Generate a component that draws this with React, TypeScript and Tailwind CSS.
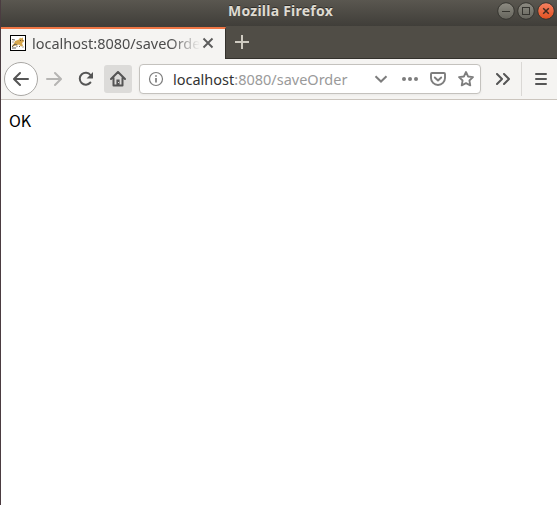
import React from 'react';

function WindowButton({ kind }: { kind: 'min' | 'max' | 'close' }) {
  const close = kind === 'close';
  return (
    <svg width="18" height="18" viewBox="0 0 18 18" className="block shrink-0">
      <defs>
        <linearGradient id={'g-' + kind} x1="0" y1="0" x2="0" y2="1">
          <stop offset="0" stopColor={close ? '#f58263' : '#8e8c83'} />
          <stop offset="1" stopColor={close ? '#e2501f' : '#65645c'} />
        </linearGradient>
      </defs>
      <circle cx="9" cy="9" r="8.3" fill={'url(#g-' + kind + ')'} stroke="#35342f" />
      {kind === 'min' && <path d="M5 9.5h8" stroke="#35342f" />}
      {kind === 'max' && <rect x="5.5" y="5.5" width="7" height="7" fill="none" stroke="#35342f" />}
      {close && <path d="M6.2 6.2l5.6 5.6M11.8 6.2l-5.6 5.6" stroke="#3f2a20" strokeWidth="1.5" />}
    </svg>
  );
}

function TitleBar() {
  return (
    <header className="flex h-[26px] items-center bg-linear-to-b from-[#5a5750] to-[#403e39]">
      <div className="w-[496px] pl-[227px] pb-[5px]">
        <h1 className="whitespace-nowrap text-[14px] leading-5 font-bold tracking-[0.24px] text-[#dfdbd2] [text-shadow:0_-1px_0_#2e2c28]">
          Mozilla Firefox
        </h1>
      </div>
      <div className="flex gap-[2px] pb-[4px]">
        <WindowButton kind="min" />
        <WindowButton kind="max" />
        <WindowButton kind="close" />
      </div>
    </header>
  );
}

function Favicon() {
  return (
    <svg width="16" height="16" viewBox="0 0 16 16" className="block shrink-0">
      <rect x=".5" y=".5" width="15" height="15" fill="#fff" stroke="#000" />
      <path d="M5 6l4-1.500 1-2 1 1 2-1v2l1 2-2 1.500 1 3-2 .500-2-2-3 1-3 1-1-1 2-2z" fill="#d6a74e" />
      <path d="M2 4.500l3 .5M2 12l3-3 2 1M2 13h4M9 11l1 1" stroke="#5d5b55" fill="none" />
      <path d="M2 7h2M6 12l2-1M12 12h2" stroke="#aaa69d" fill="none" />
      <path d="M10 5.500h1M12.500 5.500h1" stroke="#725021" />
    </svg>
  );
}

function TabStrip() {
  return (
    <div className="flex h-[33px] border-b border-[#33312c] bg-[#504d46]">
      <div className="-mb-px flex h-[33px] w-[225px] shrink-0 flex-col">
        <div className="h-px shrink-0 bg-[#403e39]" />
        <div className="flex h-[32px] items-center border-t-2 border-r border-t-[#f07746] border-r-[#33312c] bg-[#f5f4f2] pb-[2px] pl-[9px]">
          <Favicon />
          <div className="ml-[6px] w-[168px] overflow-hidden whitespace-nowrap text-[14.5px] leading-5 text-[#4c4c4c] [mask-image:linear-gradient(to_right,black_138px,transparent_168px)]">
            localhost:8080/saveOrder
          </div>
          <svg width="12" height="12" viewBox="0 0 12 12" className="ml-[2px] shrink-0">
            <path d="M1.500 1.500l9 9M10.500 1.500l-9 9" stroke="#5c5c5c" strokeWidth="1.900" />
          </svg>
        </div>
      </div>
      <svg width="14" height="14" viewBox="0 0 14 14" className="mt-[9px] ml-[9px]">
        <path d="M7 0v14M0 7h14" stroke="#cfcbc1" strokeWidth="2" />
      </svg>
    </div>
  );
}

function AddressBar() {
  return (
    <div className="ml-[7px] flex h-[30px] w-[342px] shrink-0 items-center rounded-[4px] border border-[#c4c2be] bg-white shadow-[0_1px_3px_rgba(0,0,0,0.05)]">
      <svg width="16" height="16" viewBox="0 0 16 16" className="ml-[8px] shrink-0" fill="none" stroke="#7c7c7c">
        <circle cx="8" cy="8" r="6.5" strokeWidth="1.2" />
        <path d="M8 7v4.5M8 4.2v1.6" strokeWidth="1.7" />
      </svg>
      <div className="ml-[9px] w-[201px] whitespace-nowrap text-[14.5px] leading-5 text-[#9a9a9a]">
        <span className="text-[#333333]">localhost</span>:8080/saveOrder
      </div>
      <svg width="14" height="8" viewBox="0 0 14 8" className="shrink-0" fill="none" stroke="#7d7d7d" strokeWidth="2">
        <path d="M1.5 1.2L7 6.5l5.500-5.300" />
      </svg>
      <svg width="16" height="16" viewBox="0 0 16 16" className="ml-[14px] shrink-0" fill="#7d7d7d">
        <circle cx="2" cy="8" r="2" />
        <circle cx="8" cy="8" r="2" />
        <circle cx="14" cy="8" r="2" />
      </svg>
      <svg width="16" height="16" viewBox="0 0 16 16" className="ml-[12px] shrink-0" fill="none" stroke="#7d7d7d" strokeWidth="1.900" strokeLinecap="round" strokeLinejoin="round">
        <path d="M2 2h12a1 1 0 0 1 1 1v4a7 7 0 0 1-14 0V3a1 1 0 0 1 1-1z" />
        <path d="M4.800 6.500L8 9.500l3.200-3" />
      </svg>
      <svg width="16" height="16" viewBox="0 0 16 16" className="ml-[12px] shrink-0" fill="none" stroke="#7d7d7d" strokeWidth="1.800" strokeLinejoin="round">
        <path d="M8 1l2.100 4.500 4.900.6-3.600 3.400.9 4.900L8 12.100l-4.300 2.300.9-4.900L1 6.100l4.900-.6z" />
      </svg>
    </div>
  );
}

function Toolbar() {
  return (
    <nav className="flex h-[41px] items-center border-b border-[#cbc5be] bg-[#f5f4f2]">
      <div className="ml-[3px] flex h-[34px] w-[34px] shrink-0 items-center justify-center rounded-full border border-[#aaa8a5] bg-white">
        <svg width="16" height="16" viewBox="0 0 16 16" fill="none" stroke="#555" strokeWidth="2" strokeLinecap="round" strokeLinejoin="round">
          <path d="M7 2L1 8l6 6M1.500 8H15" />
        </svg>
      </div>
      <svg width="16" height="16" viewBox="0 0 16 16" className="ml-[8px] shrink-0" fill="none" stroke="#b6b5b3" strokeWidth="2" strokeLinecap="round" strokeLinejoin="round">
        <path d="M9 2l6 6-6 6M14.500 8H1" />
      </svg>
      <svg width="16" height="16" viewBox="0 0 16 16" className="ml-[16px] shrink-0">
        <path d="M12.400 11.500A6 6 0 1 1 12.500 4" fill="none" stroke="#555" strokeWidth="2" strokeLinecap="round" />
        <path d="M15 1v6a.6.6 0 0 1-.6.6H8.500z" fill="#555" />
      </svg>
      <div className="ml-[10px] flex h-[28px] w-[28px] shrink-0 items-center justify-center rounded-[3px] bg-[#dcdbd9]">
        <svg width="16" height="16" viewBox="0 0 16 16" fill="none" stroke="#555" strokeWidth="2" strokeLinecap="round" strokeLinejoin="round">
          <path d="M1 8l7-7 7 7M3.500 7v7.500h9V7" />
          <path d="M8 8.500v6" strokeWidth="3.200" strokeLinecap="butt" />
          <path d="M8.500 11v1" stroke="#dcdbd9" strokeWidth="1" strokeLinecap="butt" />
        </svg>
      </div>
      <AddressBar />
      <svg width="14" height="12" viewBox="0 0 14 12" className="ml-[15px] shrink-0" fill="none" stroke="#555" strokeWidth="2" strokeLinecap="round" strokeLinejoin="round">
        <path d="M1 1l5 5-5 5M8 1l5 5-5 5" />
      </svg>
      <div className="ml-[11px] h-[34px] w-px shrink-0 bg-[#dad8d5]" />
      <svg width="12" height="12" viewBox="0 0 12 12" className="ml-[13px] shrink-0" stroke="#555" strokeWidth="2" strokeLinecap="round">
        <path d="M1 1h10M1 6h10M1 11h10" />
      </svg>
    </nav>
  );
}

export default function App() {
  return (
    <div className="h-[505px] w-[557px] overflow-hidden border-l border-[#4b3c41] bg-white font-['Noto_Sans',sans-serif]">
      <TitleBar />
      <TabStrip />
      <Toolbar />
      <main className="px-[8px] pt-[8px] font-['Noto_Sans_CJK_SC',sans-serif] text-[16px] leading-6 text-black">OK</main>
    </div>
  );
}
